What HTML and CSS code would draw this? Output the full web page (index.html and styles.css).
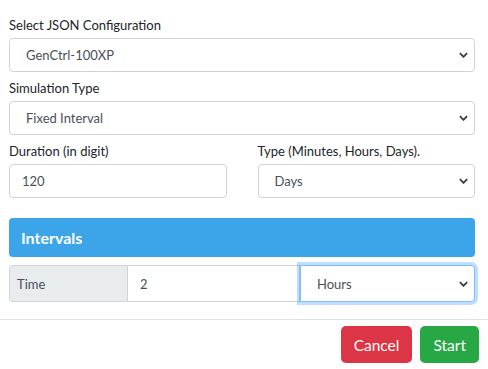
FILE: index.html
```html
<!DOCTYPE html>
<html>
<head>
    <title>Start Simulation</title>
    <link rel="stylesheet" href="styles.css">
</head>
<body>
    <div class="modal-body">
        <div class="form-group">
            <label class="field-label" for="config">Select JSON Configuration</label>
            <select id="config" class="form-select">
                <option>GenCtrl-100XP</option>
            </select>
        </div>

        <div class="form-group">
            <label class="field-label" for="simType">Simulation Type</label>
            <select id="simType" class="form-select">
                <option>Fixed Interval</option>
            </select>
        </div>

        <div class="form-row">
            <div class="form-group">
                <label class="field-label" for="duration">Duration (in digit)</label>
                <input type="text" id="duration" class="form-control" value="120">
            </div>
            <div class="form-group">
                <label class="field-label" for="durationType">Type (Minutes, Hours, Days).</label>
                <select id="durationType" class="form-select">
                    <option>Minutes</option>
                    <option>Hours</option>
                    <option selected>Days</option>
                </select>
            </div>
        </div>

        <div class="section-header">Intervals</div>

        <div class="input-group">
            <span class="input-addon">Time</span>
            <input type="text" id="intervalValue" class="form-control grouped" value="2">
            <select id="intervalType" class="form-select grouped focused">
                <option>Minutes</option>
                <option selected>Hours</option>
                <option>Days</option>
            </select>
        </div>
    </div>

    <div class="modal-footer">
        <button type="button" class="btn btn-cancel">Cancel</button>
        <button type="button" class="btn btn-start">Start</button>
    </div>
</body>
</html>
```

FILE: styles.css
```css
body {
    margin: 0;
    font-family: Lato, "Liberation Sans", Arial, sans-serif;
    font-size: 13px;
    color: #212529;
    background-color: #fff;
}

.modal-body {
    padding: 15px 13px 0 9px;
}

.form-group {
    margin-bottom: 6px;
}

.field-label {
    display: block;
    line-height: 20px;
    margin-bottom: 3px;
}

.form-control,
.form-select {
    display: block;
    box-sizing: border-box;
    width: 100%;
    height: 34px;
    margin: 0;
    font-family: inherit;
    font-size: 13px;
    color: #495057;
    background-color: #fff;
    border: 1px solid #ced4da;
    border-radius: 4px;
    outline: none;
}

.form-control {
    padding: 0 12px;
}

.form-select {
    padding: 0 24px 0 16px;
    appearance: none;
    -webkit-appearance: none;
    background-image: url("data:image/svg+xml,%3csvg xmlns='http://www.w3.org/2000/svg' viewBox='0 0 10 6'%3e%3cpath fill='none' stroke='%23343a40' stroke-width='2' d='M1 1l4 4 4-4'/%3e%3c/svg%3e");
    background-repeat: no-repeat;
    background-position: right 6px center;
    background-size: 9px 6px;
}

.form-row {
    display: grid;
    grid-template-columns: 1fr 1fr;
    column-gap: 31px;
}

.section-header {
    margin-top: 14px;
    height: 39px;
    line-height: 39px;
    padding-left: 12px;
    font-size: 16px;
    font-weight: bold;
    color: #fff;
    background-color: #3ca5ea;
    border-radius: 4px;
}

.input-group {
    display: flex;
    margin-top: 8px;
    height: 37px;
}

.input-addon {
    display: flex;
    flex: none;
    align-items: center;
    box-sizing: border-box;
    width: 119px;
    padding-left: 7px;
    color: #495057;
    background-color: #e9ecef;
    border: 1px solid #ced4da;
    border-radius: 4px 0 0 4px;
}

.grouped {
    height: 37px;
    border-radius: 0;
}

.input-group .form-control {
    flex: 1;
    min-width: 0;
    width: auto;
    border-left: none;
}

.input-group .form-select {
    width: 175px;
    flex: none;
    border-radius: 0 4px 4px 0;
}

.focused {
    position: relative;
    z-index: 1;
    border-color: #80bdff;
    box-shadow: 0 0 0 3px rgba(0, 123, 255, 0.25);
}

.modal-footer {
    display: flex;
    justify-content: flex-end;
    gap: 8px;
    margin-top: 17px;
    padding: 6px 9px 6px;
    border-top: 1px solid #dee2e6;
}

.btn {
    height: 37px;
    padding: 0 13px;
    font-family: inherit;
    font-size: 15.5px;
    color: #fff;
    border: none;
    border-radius: 5px;
    cursor: pointer;
}

.btn-cancel {
    background-color: #dc3545;
}

.btn-start {
    background-color: #28a745;
}
```
